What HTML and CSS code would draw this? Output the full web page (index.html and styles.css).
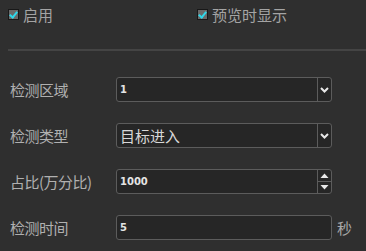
FILE: index.html
```html
<!DOCTYPE html>
<html lang="zh-CN">
<head>
  <meta charset="UTF-8">
  <title>检测设置</title>
  <link rel="stylesheet" href="styles.css">
</head>
<body>
  <div class="top">
    <label class="check"><span class="check__box"></span>启用</label>
    <label class="check check--right"><span class="check__box"></span>预览时显示</label>
  </div>
  <div class="divider"></div>

  <div class="form">
    <div class="row">
      <span class="row__label">检测区域</span>
      <div class="field field--select">
        <span class="field__value field__value--small">1</span>
        <span class="field__btn">
          <svg width="9" height="6" viewBox="0 0 9 6"><path d="M1 1 L4.5 4.5 L8 1" stroke="#e8e8e8" stroke-width="2" fill="none"/></svg>
        </span>
      </div>
    </div>
    <div class="row">
      <span class="row__label">检测类型</span>
      <div class="field field--select">
        <span class="field__value">目标进入</span>
        <span class="field__btn">
          <svg width="9" height="6" viewBox="0 0 9 6"><path d="M1 1 L4.5 4.5 L8 1" stroke="#e8e8e8" stroke-width="2" fill="none"/></svg>
        </span>
      </div>
    </div>
    <div class="row">
      <span class="row__label">占比(万分比)</span>
      <div class="field field--spin">
        <span class="field__value field__value--small">1000</span>
        <span class="spin">
          <span class="spin__btn"><svg width="9" height="5" viewBox="0 0 9 5"><path d="M0.5 5 L4.5 0.5 L8.5 5 Z" fill="#e8e8e8"/></svg></span>
          <span class="spin__btn"><svg width="9" height="5" viewBox="0 0 9 5"><path d="M0.5 0 L4.5 4.5 L8.5 0 Z" fill="#e8e8e8"/></svg></span>
        </span>
      </div>
    </div>
    <div class="row">
      <span class="row__label">检测时间</span>
      <div class="field">
        <span class="field__value field__value--small">5</span>
      </div>
      <span class="row__unit">秒</span>
    </div>
  </div>
</body>
</html>
```

FILE: styles.css
```css
body {
  margin: 0;
  background-color: #2f2f2f;
  font-family: "Noto Sans CJK SC", "Liberation Sans", sans-serif;
  color: #b4b4b4;
}

.top {
  display: flex;
  height: 29px;
  padding: 0 0 0 8px;
  align-items: center;
  font-size: 15px;
}
.check {
  display: flex;
  flex-shrink: 0;
  align-items: center;
  gap: 4px;
  width: 189px;
  color: #a4a4a4;
}
.check--right {
  width: auto;
}
.check__box {
  position: relative;
  width: 9px;
  height: 9px;
  background-color: #6a6a6a;
  border: 1px solid #181818;
}
.check__box::after {
  content: "";
  position: absolute;
  left: 2px;
  top: 0px;
  width: 3px;
  height: 6px;
  border-right: 2px solid #2fd8ea;
  border-bottom: 2px solid #2fd8ea;
  transform: rotate(40deg);
}

.divider {
  height: 2px;
  margin: 20px 0 0 8px;
  background-color: #444;
}

.form {
  padding: 26px 0 0 10px;
}
.row {
  display: grid;
  grid-template-columns: 106px 216px auto;
  align-items: center;
  height: 25px;
  margin-bottom: 21px;
  font-size: 15px;
}
.row__label {
  color: #b0b0b0;
  white-space: nowrap;
  letter-spacing: -0.5px;
}
.row__unit {
  margin-left: 5px;
  color: #a8a8a8;
}

.field {
  display: flex;
  height: 25px;
  box-sizing: border-box;
  background-color: #262626;
  border: 1px solid #5c5c5c;
  border-radius: 3px;
}
.field__value {
  flex: 1;
  padding-left: 3px;
  line-height: 23px;
  color: #d8d8d8;
}
.field__value--small {
  font-family: "DejaVu Sans", sans-serif;
  font-size: 10px;
  font-weight: bold;
  color: #e4e4e4;
}
.field__btn {
  display: flex;
  align-items: center;
  justify-content: center;
  width: 13px;
  border-left: 1px solid #5c5c5c;
}

.spin {
  display: flex;
  flex-direction: column;
  width: 13px;
  border-left: 1px solid #5c5c5c;
}
.spin__btn {
  display: flex;
  flex: 1;
  align-items: center;
  justify-content: center;
}
.spin__btn + .spin__btn {
  border-top: 1px solid #5c5c5c;
}
```
